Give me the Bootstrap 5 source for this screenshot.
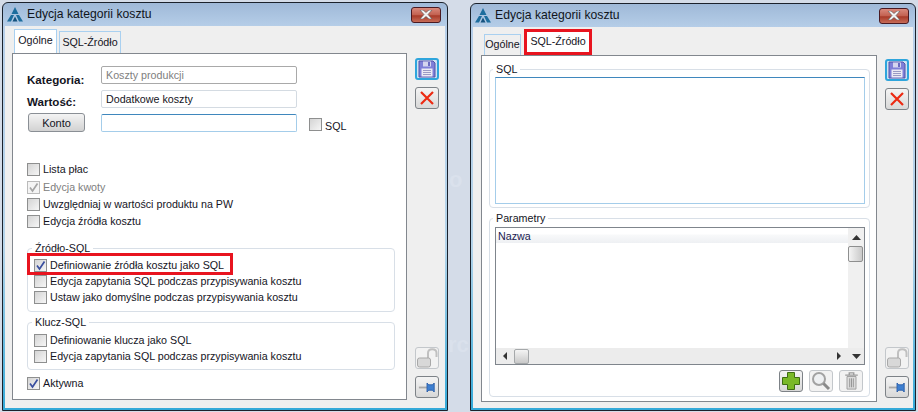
<!DOCTYPE html>
<html lang="pl">
<head>
<meta charset="UTF-8">
<title>Edycja kategorii kosztu</title>
<link href="https://cdn.jsdelivr.net/npm/bootstrap@5.3.0/dist/css/bootstrap.min.css" rel="stylesheet">
<style>
  html, body { width: 918px; height: 412px; overflow: hidden; }
  body { background: #d4dce8; font-family: "Liberation Sans", sans-serif; font-size: 10.7px; color: #14141e; position: relative; }
  .ghost-txt { position: absolute; font-weight: 700; font-size: 22px; line-height: 22px; color: #dae1ec; }
  .ghost-rc { left: 448px; top: 334px; }
  .ghost-o { left: 449px; top: 169px; }
  .desk-win { position: absolute; top: 2px; width: 446px; height: 409px; border: 1px solid #1b222c; border-radius: 6px 6px 0 0; padding: 0 2px 2px; background: linear-gradient(#9fb9d8 0, #b7cfe9 25px, #b4d4ea 60%, #33a9d8 100%); }
  .win-a { left: 2px; }
  .win-b { left: 470px; top: 3px; height: 408px; }
  .title-bar { height: 23px; padding-left: 2px; font-size: 12.2px; color: #10151c; }
  .logo-ico { margin-right: 4px; }
  .win-x { width: 30px; height: 16px; margin: 0 4px 0 auto; border: 1px solid #4a1a22; border-radius: 3px; background: linear-gradient(#d9897c, #c2604f 50%, #a83a28 55%, #c76c58); }
  .win-body { height: 382px; background: #efefef; }
  .win-b .win-body { height: 381px; }
  .main-col { width: 402px; padding-left: 7px; }
  .win-b .main-col { width: 404px; padding-left: 8px; }
  .tab-row { height: 27px; padding-left: 2px; gap: 2px; }
  .win-b .tab-row { padding-left: 3px; gap: 3px; height: 28px; }
  .tab-item { height: 22px; background: #efefef; border: 1px solid #a9d0f0; border-bottom: 0; line-height: 21px; text-align: center; }
  .tab-w1 { width: 37px; height: 21px; line-height: 19px; }
  .tab-w2 { width: 62px; }
  .tab-on { height: 24px; background: #fff; line-height: 20px; }
  .tab-on.tab-w1 { width: 43px; }
  .tab-on.tab-w2 { width: 68px; height: 26px; line-height: 23px; }
  .tab-panel { width: 395px; height: 347px; background: #fff; border: 1px solid #82878e; }
  .win-b .tab-panel { width: 396px; }
  .side-col { width: 24px; margin-left: 8px; padding: 32px 0 10px; gap: 7px; }
  .tool-btn { width: 24px; height: 22px; border: 1px solid #7d8287; border-radius: 3px; background: linear-gradient(#f4f4f4, #d8d8d8); padding: 0; }
  .tool-on { border: 2px solid #2fa5dc; background: #cfe3f4; }
  .tool-off { border-color: #c3c7cb; background: #f2f2f2; }
  .form-area { padding: 12px 11px 0 14px; }
  .field-row { height: 24px; }
  .field-lbl { width: 74px; font-weight: 700; font-size: 11.6px; padding-top: 3px; }
  .lbl-low { padding-top: 5px; }
  .fake-input { width: 196px; height: 18px; padding: 0 4px; border: 1px solid #d4dbe2; border-radius: 2px; line-height: 16px; background: #fff; }
  .fake-grey { border-color: #a9a9a9; color: #808080; }
  .fake-focus { border-color: #3f87bd #a4cdea #a4cdea #a4cdea; }
  .konto-btn { width: 57px; height: 19px; margin: -1px 16px 0 1px; border: 1px solid #8a8f95; border-radius: 3px; background: linear-gradient(#f4f4f4, #d2d2d2); font-size: 11px; line-height: 16px; color: inherit; padding: 0; }
  .sql-chk { margin-left: 12px; margin-top: 4px; }
  .sql-lbl { margin-top: 4px; }
  .chk { width: 13px; height: 13px; flex: none; border: 1px solid #8e8f8f; background: linear-gradient(135deg, #d4d4d4, #f6f6f6); display: flex; align-items: center; justify-content: center; margin-right: 3px; color: #3a4f9f; }
  .chk-row { height: 17px; }
  .grp-box .chk-row { height: 16px; }
  .first-row { margin-top: 23px; margin-bottom: 1px; }
  .chk-dim { color: #808080; }
  .chk-dim .chk { border-color: #bbb; background: #f4f4f4; color: #a5a5a5; }
  .grp-box { border: 1px solid #d8dfe7; border-radius: 4px; padding: 0 0 6px 6px; margin: 0; }
  .grp-box legend { float: none; width: auto; font-size: 10.7px; line-height: 13px; margin: 0 0 2px -2px; padding: 0 3px; }
  .grp-zrodlo { margin-top: 12px; }
  .grp-klucz { margin-top: 4px; padding-bottom: 5px; }
  .grp-klucz legend { margin-bottom: 3px; }
  .aktywna-row { margin-top: 5px; }
  .red-mark { position: relative; }
  .red-mark::after { content: ""; position: absolute; border: 3px solid #e8141f; pointer-events: none; }
  .mark-row::after { left: -7px; width: 206px; top: -4px; bottom: -2px; }
  .mark-tab::after { left: -1px; right: -1px; top: -1px; bottom: 0; }
  .param-area { padding: 7px 0 0 7px; }
  .param-area .grp-box { width: 381px; padding: 0 0 3px 5px; }
  .param-area legend { margin: 0 0 1px -2px; }
  .grp-param { margin-top: 4px; }
  .param-area .grp-param { padding-bottom: 4px; }
  .param-area .grp-param legend { margin-bottom: 2px; }
  .sql-box { height: 127px; width: 370px; border: 1px solid #a4cdea; border-top-color: #3f87bd; background: #fff; }
  .grid-box { width: 370px; height: 138px; border: 1px solid #7f858c; }
  .grid-head { height: 14px; padding-left: 2px; line-height: 14px; color: #1a1a50; background: linear-gradient(#fff 5px, #f8f9fa 6px, #eef0f3); margin-top: 1px; }
  .v-scroll { width: 16px; background: #f0f0f0; flex: none; }
  .h-scroll { height: 16px; background: #ececec; }
  .arrow-up { height: 18px; }
  .v-thumb { width: 15px; height: 16px; border: 1px solid #8e8f8f; border-radius: 2px; background: linear-gradient(90deg, #f4f4f4, #c9c9c9); }
  .h-thumb { width: 15px; height: 15px; margin-left: 7px; border: 1px solid #a5a8aa; border-radius: 2px; background: linear-gradient(#f4f4f4, #c9c9c9); }
  .arrow-left { padding-left: 7px; }
  .arrow-right { padding-right: 7px; }
  .grid-btns { gap: 6px; padding-right: 6px; margin-top: 5px; }
</style>
</head>
<body>

<svg width="0" height="0" class="d-none">
  <symbol id="logo" viewBox="0 0 16 15">
    <path d="M8 0 L11.500 7 L4.500 7 Z M4 8 L7 8 L4 14.500 L0 14.500 Z M12 8 L9 8 L12 14.500 L16 14.500 Z" fill="#1d6d9d"/>
    <path d="M8 9.500 L10.500 14.500 L5.500 14.500 Z" fill="#15527f"/>
  </symbol>
  <symbol id="xmark" viewBox="0 0 14 9">
    <path d="M1 0 H4 L7 2.500 L10 0 H13 L9 4.500 L13 9 H10 L7 6.500 L4 9 H1 L5 4.500 Z" fill="#f2f2f2" stroke="#555" stroke-width=".6"/>
  </symbol>
  <symbol id="tick" viewBox="0 0 11 11">
    <path d="M2 5.500 L4.500 9 L9.500 1.500" fill="none" stroke="currentColor" stroke-width="1.700"/>
  </symbol>
  <symbol id="floppy" viewBox="0 0 18 18">
    <path d="M1 1 H15 L17 3 V17 H1 Z" fill="#7f7fd8" stroke="#5454a8"/>
    <rect x="5" y="1.500" width="8" height="5" fill="#d5d5ee"/>
    <rect x="10" y="2" width="2" height="4" fill="#6a6ac0"/>
    <rect x="3.500" y="8.500" width="11" height="8" fill="#eceaf4"/>
    <path d="M5 10.500 H13 M5 12.500 H13 M5 14.500 H13" stroke="#9a9ac4"/>
  </symbol>
  <symbol id="redx" viewBox="0 0 18 18">
    <path d="M3 3 L15 15 M15 3 L3 15" stroke="#ec2a12" stroke-width="2.200" fill="none"/>
  </symbol>
  <symbol id="lock" viewBox="0 0 22 20">
    <path d="M12 10 V5 C12 0 20.500 0 20.500 5 V9" fill="none" stroke="#c0c0c0" stroke-width="2"/>
    <rect x="1.500" y="10" width="13" height="9" rx="2" fill="#d8d8d8" stroke="#a8a8a8"/>
  </symbol>
  <symbol id="pin" viewBox="0 0 20 14">
    <path d="M1 7 H10" stroke="#a8a8a8" stroke-width="2"/>
    <path d="M10 2 L12 4 H16 L18 2 V12 L16 10 H12 L10 12 Z" fill="#3e7fd0" stroke="#2a5da8"/>
  </symbol>
  <symbol id="plus" viewBox="0 0 18 18">
    <path d="M5.500 .5 H12.500 V5.500 H17.500 V12.500 H12.500 V17.500 H5.500 V12.500 H.5 V5.500 H5.500 Z" fill="#7ab928" stroke="#3e6d12"/>
  </symbol>
  <symbol id="lens" viewBox="0 0 20 20">
    <circle cx="8" cy="8" r="6" fill="#eef0f2" stroke="#a2a2a2" stroke-width="2"/>
    <path d="M12.500 12.500 L18 18" stroke="#8a8a8a" stroke-width="3"/>
  </symbol>
  <symbol id="trash" viewBox="0 0 16 20">
    <path d="M1 3.500 H15 M5.500 3 V1 H10.500 V3" stroke="#9b9b9b" stroke-width="1.500" fill="none"/>
    <path d="M3 5 H13 V19 H3 Z" fill="#dcdcdc" stroke="#9b9b9b"/>
    <path d="M6 7 V17 M8 7 V17 M10 7 V17" stroke="#8f8f8f"/>
  </symbol>
</svg>

<span class="ghost-txt ghost-rc">rc</span>
<span class="ghost-txt ghost-o">o</span>

<div class="desk-win win-a">
  <div class="title-bar d-flex align-items-center">
    <svg width="16" height="15" class="logo-ico"><use href="#logo"/></svg>
    <span>Edycja kategorii kosztu</span>
    <div class="win-x d-flex align-items-center justify-content-center"><svg width="14" height="9"><use href="#xmark"/></svg></div>
  </div>
  <div class="win-body d-flex">
    <div class="main-col">
      <div class="tab-row d-flex align-items-end">
        <div class="tab-item tab-w1 tab-on">Ogólne</div>
        <div class="tab-item tab-w2">SQL-Źródło</div>
      </div>
      <div class="tab-panel form-area">
        <div class="field-row d-flex"><div class="field-lbl lbl-low">Kategoria:</div><div class="fake-input fake-grey">Koszty produkcji</div></div>
        <div class="field-row d-flex"><div class="field-lbl">Wartość:</div><div class="fake-input">Dodatkowe koszty</div></div>
        <div class="field-row d-flex align-items-start">
          <button class="konto-btn" type="button">Konto</button>
          <div class="fake-input fake-focus"></div>
          <div class="chk sql-chk"></div><span class="sql-lbl">SQL</span>
        </div>
        <div class="chk-row d-flex align-items-center first-row"><span class="chk"></span>Lista płac</div>
        <div class="chk-row d-flex align-items-center chk-dim"><span class="chk"><svg width="11" height="11"><use href="#tick"/></svg></span>Edycja kwoty</div>
        <div class="chk-row d-flex align-items-center"><span class="chk"></span>Uwzględniaj w wartości produktu na PW</div>
        <div class="chk-row d-flex align-items-center"><span class="chk"></span>Edycja źródła kosztu</div>
        <fieldset class="grp-box grp-zrodlo">
          <legend>Źródło-SQL</legend>
          <div class="chk-row d-flex align-items-center red-mark mark-row"><span class="chk"><svg width="11" height="11"><use href="#tick"/></svg></span>Definiowanie źródła kosztu jako SQL</div>
          <div class="chk-row d-flex align-items-center"><span class="chk"></span>Edycja zapytania SQL podczas przypisywania kosztu</div>
          <div class="chk-row d-flex align-items-center"><span class="chk"></span>Ustaw jako domyślne podczas przypisywania kosztu</div>
        </fieldset>
        <fieldset class="grp-box grp-klucz">
          <legend>Klucz-SQL</legend>
          <div class="chk-row d-flex align-items-center"><span class="chk"></span>Definiowanie klucza jako SQL</div>
          <div class="chk-row d-flex align-items-center"><span class="chk"></span>Edycja zapytania SQL podczas przypisywania kosztu</div>
        </fieldset>
        <div class="chk-row d-flex align-items-center aktywna-row"><span class="chk"><svg width="11" height="11"><use href="#tick"/></svg></span>Aktywna</div>
      </div>
    </div>
    <div class="side-col d-flex flex-column">
      <button class="tool-btn tool-on d-flex align-items-center justify-content-center" type="button"><svg width="18" height="18"><use href="#floppy"/></svg></button>
      <button class="tool-btn d-flex align-items-center justify-content-center" type="button"><svg width="18" height="18"><use href="#redx"/></svg></button>
      <button class="tool-btn tool-off mt-auto d-flex align-items-center justify-content-center" type="button"><svg width="22" height="20"><use href="#lock"/></svg></button>
      <button class="tool-btn d-flex align-items-center justify-content-center" type="button"><svg width="18" height="13"><use href="#pin"/></svg></button>
    </div>
  </div>
</div>

<div class="desk-win win-b">
  <div class="title-bar d-flex align-items-center">
    <svg width="16" height="15" class="logo-ico"><use href="#logo"/></svg>
    <span>Edycja kategorii kosztu</span>
    <div class="win-x d-flex align-items-center justify-content-center"><svg width="14" height="9"><use href="#xmark"/></svg></div>
  </div>
  <div class="win-body d-flex">
    <div class="main-col">
      <div class="tab-row d-flex align-items-end">
        <div class="tab-item tab-w1">Ogólne</div>
        <div class="tab-item tab-on tab-w2 red-mark mark-tab">SQL-Źródło</div>
      </div>
      <div class="tab-panel param-area">
        <fieldset class="grp-box">
          <legend>SQL</legend>
          <div class="sql-box"></div>
        </fieldset>
        <fieldset class="grp-box grp-param">
          <legend>Parametry</legend>
          <div class="grid-box d-flex flex-column">
            <div class="d-flex flex-grow-1">
              <div class="flex-grow-1"><div class="grid-head">Nazwa</div></div>
              <div class="v-scroll">
                <div class="arrow-up d-flex align-items-center justify-content-center"><svg width="9" height="5"><path d="M0 5 L4.500 0 L9 5 Z" fill="#333"/></svg></div>
                <div class="v-thumb"></div>
              </div>
            </div>
            <div class="d-flex">
              <div class="h-scroll flex-grow-1 d-flex align-items-center">
                <div class="arrow-left d-flex"><svg width="4" height="8"><path d="M4 0 L0 4 L4 8 Z" fill="#333"/></svg></div>
                <div class="h-thumb"></div>
                <div class="ms-auto arrow-right d-flex"><svg width="4" height="8"><path d="M0 0 L4 4 L0 8 Z" fill="#333"/></svg></div>
              </div>
              <div class="v-scroll h-scroll d-flex align-items-center justify-content-center"><svg width="9" height="5"><path d="M0 0 L4.500 5 L9 0 Z" fill="#333"/></svg></div>
            </div>
          </div>
          <div class="d-flex justify-content-end grid-btns">
            <button class="tool-btn d-flex align-items-center justify-content-center" type="button"><svg width="18" height="18"><use href="#plus"/></svg></button>
            <button class="tool-btn tool-off d-flex align-items-center justify-content-center" type="button"><svg width="20" height="20"><use href="#lens"/></svg></button>
            <button class="tool-btn tool-off d-flex align-items-center justify-content-center" type="button"><svg width="15" height="18"><use href="#trash"/></svg></button>
          </div>
        </fieldset>
      </div>
    </div>
    <div class="side-col d-flex flex-column">
      <button class="tool-btn tool-on d-flex align-items-center justify-content-center" type="button"><svg width="18" height="18"><use href="#floppy"/></svg></button>
      <button class="tool-btn d-flex align-items-center justify-content-center" type="button"><svg width="18" height="18"><use href="#redx"/></svg></button>
      <button class="tool-btn tool-off mt-auto d-flex align-items-center justify-content-center" type="button"><svg width="22" height="20"><use href="#lock"/></svg></button>
      <button class="tool-btn d-flex align-items-center justify-content-center" type="button"><svg width="18" height="13"><use href="#pin"/></svg></button>
    </div>
  </div>
</div>

<script src="https://cdn.jsdelivr.net/npm/bootstrap@5.3.0/dist/js/bootstrap.bundle.min.js"></script>
</body>
</html>
